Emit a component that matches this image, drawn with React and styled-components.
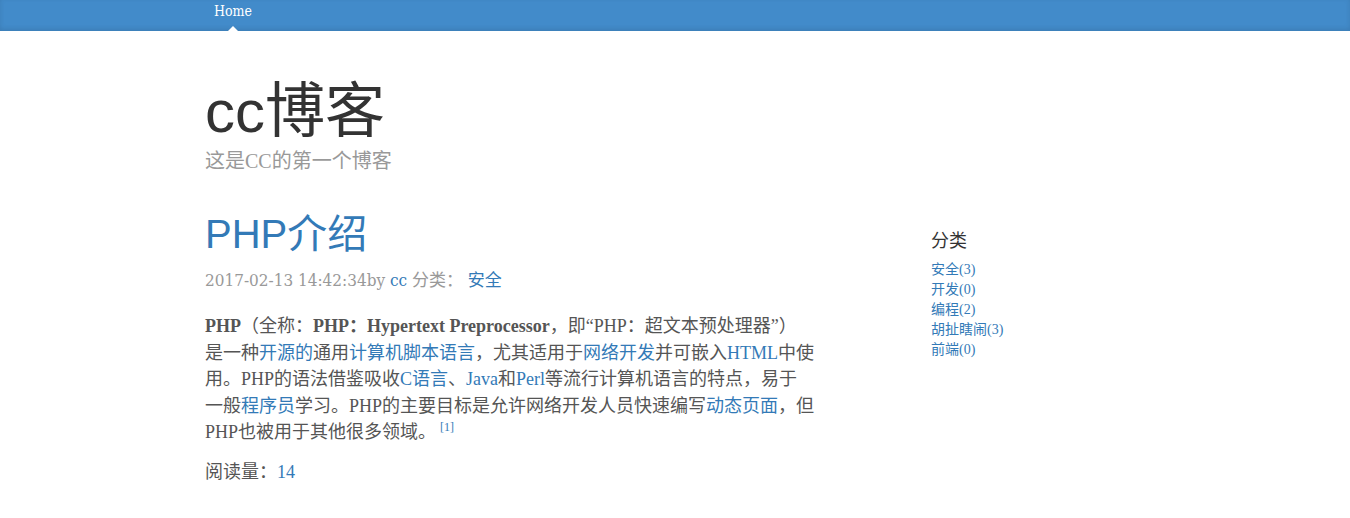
import React from "react";
import styled, { createGlobalStyle } from "styled-components";

const GlobalStyle = createGlobalStyle`
  body {
    margin: 0;
    background: #fff;
    color: #555;
    font-family: "Liberation Serif", "Noto Sans CJK SC", serif;
  }
  a {
    color: #337ab7;
    text-decoration: none;
  }
`;

const Masthead = styled.div`
  background-color: #428bca;
  box-shadow: inset 0 -2px 5px rgba(0, 0, 0, 0.1);
  height: 31px;
`;

const Container = styled.div`
  width: 940px;
  margin: 0 auto;
`;

const Nav = styled.nav`
  display: flex;
  height: 31px;
`;

const NavItem = styled.a`
  position: relative;
  display: inline-block;
  padding: 0 9px;
  font-family: "DejaVu Serif Condensed", "DejaVu Serif", "Noto Sans CJK SC", serif;
  font-stretch: condensed;
  font-size: 14px;
  line-height: 23px;
  color: ${(p) => (p.$active ? "#fff" : "#cdddeb")};

  &::after {
    content: ${(p) => (p.$active ? '""' : "none")};
    position: absolute;
    bottom: 0;
    left: 50%;
    margin-left: -5px;
    width: 0;
    height: 0;
    border: solid transparent;
    border-bottom-color: #fff;
    border-width: 0 5px 5px;
  }
`;

const Header = styled.header`
  padding: 48px 0 37px;
`;

const BlogTitle = styled.h1`
  margin: 0;
  font-family: "Liberation Sans", "Noto Sans CJK SC", sans-serif;
  font-size: 60px;
  font-weight: normal;
  line-height: 66px;
  color: #333;
`;

const Description = styled.p`
  margin: 2px 0 0;
  font-size: 20px;
  line-height: 28px;
  color: #999;
`;

const Row = styled.div`
  display: grid;
  grid-template-columns: 617px 1fr;
  column-gap: 109px;
`;

const Main = styled.main`
  font-size: 18px;
  line-height: 26.5px;
`;

const PostTitle = styled.h2`
  margin: 0 0 11px;
  font-family: "Liberation Sans", "Noto Sans CJK SC", sans-serif;
  font-size: 40px;
  font-weight: normal;
  line-height: 44px;
  color: #337ab7;
`;

const Meta = styled.p`
  margin: 0 0 20px;
  font-family: "DejaVu Serif Condensed", "DejaVu Serif", "Noto Sans CJK SC", serif;
  font-stretch: condensed;
  font-size: 17px;
  line-height: 26px;
  color: #999;
`;

const Body = styled.p`
  margin: 0 0 13px;

  strong {
    font-weight: bold;
  }
`;

const Note = styled.sup`
  font-size: 12px;
  line-height: 0;
  vertical-align: 7px;
  margin-left: 4px;
  color: #337ab7;
`;

const Stat = styled.p`
  margin: 0;
`;

const Sidebar = styled.aside`
  padding-top: 19px;
`;

const SideHeading = styled.h4`
  margin: 0 0 9px;
  font-family: "Liberation Sans", "Noto Sans CJK SC", sans-serif;
  font-size: 18px;
  font-weight: normal;
  line-height: 20px;
  color: #333;
`;

const CatList = styled.ol`
  list-style: none;
  margin: 0;
  padding: 0;
  font-size: 14px;
  line-height: 20px;
`;

const categories = [
  { name: "安全", count: 3 },
  { name: "开发", count: 0 },
  { name: "编程", count: 2 },
  { name: "胡扯瞎闹", count: 3 },
  { name: "前端", count: 0 },
];

export default function App() {
  return (
    <>
      <GlobalStyle />
      <Masthead>
        <Container>
          <Nav>
            <NavItem href="#" $active>
              Home
            </NavItem>
          </Nav>
        </Container>
      </Masthead>
      <Container>
        <Header>
          <BlogTitle>cc博客</BlogTitle>
          <Description>这是CC的第一个博客</Description>
        </Header>
        <Row>
          <Main>
            <PostTitle>PHP介绍</PostTitle>
            <Meta>
              2017-02-13 14:42:34by <a href="#">cc</a> 分类： <a href="#">安全</a>
            </Meta>
            <Body>
              <strong>PHP</strong>（全称：<strong>PHP：Hypertext Preprocessor</strong>，即“PHP：超文本预处理器”）
              <br />
              是一种<a href="#">开源的</a>通用<a href="#">计算机脚本语言</a>，尤其适用于<a href="#">网络开发</a>并可嵌入
              <a href="#">HTML</a>中使
              <br />
              用。PHP的语法借鉴吸收<a href="#">C语言</a>、<a href="#">Java</a>和<a href="#">Perl</a>
              等流行计算机语言的特点，易于
              <br />
              一般<a href="#">程序员</a>学习。PHP的主要目标是允许网络开发人员快速编写<a href="#">动态页面</a>，但
              <br />
              PHP也被用于其他很多领域。
              <Note>[1]</Note>
            </Body>
            <Stat>
              阅读量：<a href="#">14</a>
            </Stat>
          </Main>
          <Sidebar>
            <SideHeading>分类</SideHeading>
            <CatList>
              {categories.map((c) => (
                <li key={c.name}>
                  <a href="#">
                    {c.name}({c.count})
                  </a>
                </li>
              ))}
            </CatList>
          </Sidebar>
        </Row>
      </Container>
    </>
  );
}
